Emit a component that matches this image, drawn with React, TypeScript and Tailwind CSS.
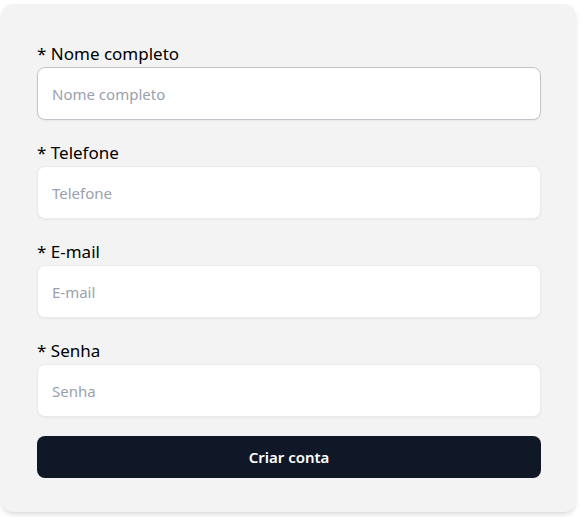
import { useState } from 'react'

const FIELDS = [
  { id: 'nome', label: 'Nome completo', type: 'text' },
  { id: 'telefone', label: 'Telefone', type: 'tel' },
  { id: 'email', label: 'E-mail', type: 'email' },
  { id: 'senha', label: 'Senha', type: 'password' },
]

export default function App() {
  const [values, setValues] = useState<Record<string, string>>({})

  return (
    <div className="min-h-screen bg-white font-['Noto_Sans',sans-serif]">
      <div className="ml-px mt-1 w-[575px] rounded-xl bg-[#f3f3f3] pl-9 pr-[35px] pt-[38px] pb-[34px] shadow-md">
        <form className="flex flex-col" onSubmit={(e) => e.preventDefault()}>
          {FIELDS.map((field, i) => (
            <div key={field.id} className="mb-[21px] flex flex-col">
              <label htmlFor={field.id} className="h-[25px] pb-0.5 text-[17px] leading-[23px] text-black">
                * {field.label}
              </label>
              <input
                id={field.id}
                type={field.type}
                autoFocus={i === 0}
                placeholder={field.label}
                value={values[field.id] || ''}
                onChange={(e) => setValues({ ...values, [field.id]: e.target.value })}
                className={`h-[53px] rounded-lg border bg-white px-[14px] text-[15px] text-gray-900 caret-gray-900 outline-none shadow-xs placeholder:text-gray-400 ${
                  i === 0 ? 'border-[#c4c4cc]' : 'border-[#ebebef]'
                }`}
              />
            </div>
          ))}
          <button
            type="submit"
            className="-mt-0.5 h-[42px] rounded-lg bg-gray-900 text-[15px] font-semibold text-white"
          >
            Criar conta
          </button>
        </form>
      </div>
    </div>
  )
}
